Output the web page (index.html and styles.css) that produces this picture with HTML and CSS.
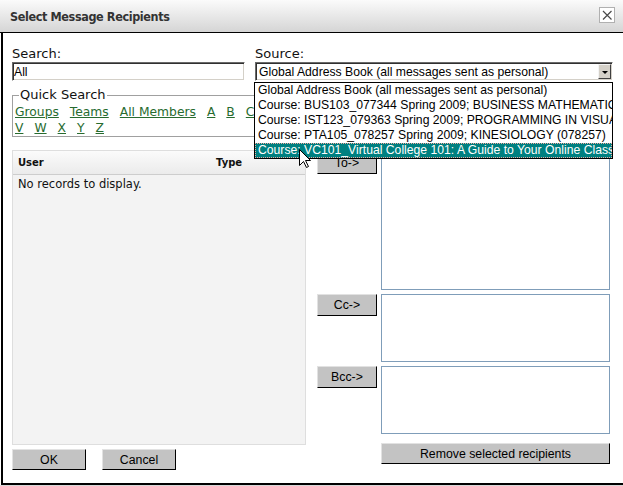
FILE: index.html
```html
<!DOCTYPE html>
<html lang="en">
<head>
<meta charset="utf-8">
<title>Select Message Recipients</title>
<link rel="stylesheet" href="styles.css">
</head>
<body>
<div class="dialog">
  <div class="titlebar">
    <span class="title">Select Message Recipients</span>
    <button class="close" type="button" aria-label="Close">
      <svg width="14" height="14" viewBox="0 0 14 14"><path d="M3 3 L11.5 11.5 M11.5 3 L3 11.5" stroke="#4a4a4a" stroke-width="1.2" fill="none"/></svg>
    </button>
  </div>
  <div class="body">
    <div class="top-row">
      <div class="field search-field">
        <label class="label">Search:</label>
        <input class="text-input" type="text" value="All">
      </div>
      <div class="field source-field">
        <label class="label">Source:</label>
        <div class="select">
          <span class="select-value">Global Address Book (all messages sent as personal)</span>
          <span class="select-arrow"><span class="tri"></span></span>
        </div>
      </div>
    </div>
    <fieldset class="quick">
      <legend class="quick-legend">Quick Search</legend>
      <div class="links">
        <a href="#">Groups</a><a href="#">Teams</a><a href="#">All Members</a><a href="#">A</a><a href="#">B</a><a href="#">C</a><a href="#">D</a><a href="#">E</a><a href="#">F</a><a href="#">G</a><a href="#">H</a><a href="#">I</a><a href="#">J</a><a href="#">K</a><a href="#">L</a><a href="#">M</a><a href="#">N</a><a href="#">O</a><a href="#">P</a><a href="#">Q</a><a href="#">R</a><a href="#">S</a><a href="#">T</a><a href="#">U</a><a href="#">V</a><a href="#">W</a><a href="#">X</a><a href="#">Y</a><a href="#">Z</a>
      </div>
    </fieldset>
    <div class="main">
      <div class="left-col">
        <div class="grid-panel">
          <div class="grid-head">
            <span class="col-user">User</span>
            <span class="col-type">Type</span>
          </div>
          <div class="grid-empty">No records to display.</div>
        </div>
        <div class="actions">
          <button class="btn btn-action" type="button">OK</button>
          <button class="btn btn-action" type="button">Cancel</button>
        </div>
      </div>
      <div class="recipients">
        <button class="btn btn-add" type="button">To-&gt;</button>
        <div class="rbox rbox-to"></div>
        <button class="btn btn-add" type="button">Cc-&gt;</button>
        <div class="rbox"></div>
        <button class="btn btn-add" type="button">Bcc-&gt;</button>
        <div class="rbox"></div>
        <button class="btn btn-remove" type="button">Remove selected recipients</button>
      </div>
    </div>
  </div>
  <ul class="dropdown">
    <li>Global Address Book (all messages sent as personal)</li>
    <li>Course: BUS103_077344 Spring 2009; BUSINESS MATHEMATICS (077344)</li>
    <li>Course: IST123_079363 Spring 2009; PROGRAMMING IN VISUAL BASIC (079363)</li>
    <li>Course: PTA105_078257 Spring 2009; KINESIOLOGY (078257)</li>
    <li class="selected">Course: VC101_Virtual College 101: A Guide to Your Online Classroom</li>
  </ul>
  <svg class="cursor" width="13" height="20" viewBox="0 0 13 20"><path d="M0.5 0.5 L0.5 16.5 L4.5 12.5 L7.5 18.5 L9.5 17.5 L6.5 11.5 L11.5 11.5 Z" fill="#fff" stroke="#000" stroke-width="1"/></svg>
</div>
<div class="page-edge"></div>
</body>
</html>
```
FILE: styles.css
```css
* { box-sizing: border-box; }
html, body { margin: 0; padding: 0; background: #fff; }
body {
  width: 623px;
  height: 486px;
  overflow: hidden;
  font-family: "DejaVu Sans", Verdana, sans-serif;
  color: #000;
}
.dialog {
  position: relative;
  width: 623px;
  height: 485px;
}
.titlebar {
  height: 33px;
  display: flex;
  justify-content: space-between;
  align-items: center;
  padding: 0 8px 0 10px;
  background: linear-gradient(#fbfbfb, #d5d5d5);
  border-bottom: 1px solid #000;
}
.title {
  font-family: "DejaVu Sans Condensed", "Liberation Sans", sans-serif;
  font-weight: bold;
  font-size: 12.5px;
  letter-spacing: -0.38px;
  color: #333;
}
.close {
  align-self: flex-start;
  margin-top: 7px;
  width: 16px;
  height: 16px;
  padding: 0;
  border: 1px solid #b0b0b0;
  background: #fff;
  display: flex;
  align-items: center;
  justify-content: center;
}
.close svg { display: block; }
.body {
  height: 452px;
  margin-left: 1px;
  border-left: 2px solid #000;
  border-bottom: 2px solid #000;
  padding: 12px 0 0 9px;
}
.top-row {
  display: flex;
  gap: 10px;
}
.label {
  display: block;
  font-size: 13px;
  line-height: 17px;
  color: #111;
}
.text-input {
  display: block;
  margin: 0;
  width: 233px;
  height: 19px;
  padding: 0 1px;
  border: 1px solid;
  border-color: #6a6a6a #fff #fff #6a6a6a;
  box-shadow: inset 1px 1px 0 #303030, inset -1px -1px 0 #d4d0c8;
  font-family: "Liberation Sans", Arial, sans-serif;
  font-size: 12.2px;
  color: #000;
  outline: none;
}
.select {
  width: 358px;
  height: 19px;
  display: flex;
  align-items: center;
  padding: 0 1px 0 3px;
  border: 1px solid;
  border-color: #6a6a6a #fff #fff #6a6a6a;
  box-shadow: inset 1px 1px 0 #303030, inset -1px -1px 0 #d4d0c8;
  font-family: "Liberation Sans", Arial, sans-serif;
  font-size: 12.2px;
  white-space: nowrap;
}
.select-arrow {
  margin-left: auto;
  width: 13px;
  height: 15px;
  background: #d4d0c8;
  border: 1px solid;
  border-color: #f4f4f4 #404040 #404040 #f4f4f4;
  display: flex;
  align-items: center;
  justify-content: center;
}
.tri {
  width: 0;
  height: 0;
  border-left: 3px solid transparent;
  border-right: 3px solid transparent;
  border-top: 3px solid #000;
  margin-top: 1px;
}
.quick {
  margin: 6px 0 0 0;
  width: 600px;
  min-width: 0;
  padding: 0 2px 0 2px;
  border: 1px solid #a0a0a0;
}
.quick-legend {
  margin-left: 4px;
  padding: 0 1px;
  font-size: 13px;
  line-height: 16px;
  color: #111;
}
.links {
  display: flex;
  flex-wrap: wrap;
  column-gap: 11px;
  padding-top: 1px;
  font-size: 12.3px;
  line-height: 16px;
}
.links a {
  color: #276b2f;
  text-decoration: underline;
}
.main {
  display: flex;
  align-items: flex-start;
  gap: 11px;
  margin-top: 13px;
}
.left-col {
  width: 294px;
}
.grid-panel {
  height: 295px;
  border: 1px solid #dedede;
  background: #f3f3f3;
}
.grid-head {
  height: 24px;
  display: flex;
  align-items: center;
  padding-left: 5px;
  background: linear-gradient(#fbfbfb, #ebebeb);
  border-bottom: 1px solid #cdcdcd;
  font-size: 10px;
  font-weight: bold;
  color: #111;
}
.col-user { width: 198px; }
.grid-empty {
  padding: 1px 5px 0;
  font-size: 11.5px;
  line-height: 16px;
  color: #111;
}
.actions {
  display: flex;
  gap: 16px;
  margin-top: 4px;
}
.btn {
  margin: 0;
  padding: 0;
  background: #c3c3c3;
  border: 1px solid;
  border-color: #e2e2e2 #000 #000 #e2e2e2;
  font-family: "Liberation Sans", Arial, sans-serif;
  font-size: 12.3px;
  color: #000;
}
.btn-action {
  width: 74px;
  height: 21px;
}
.recipients {
  display: grid;
  grid-template-columns: 60px 229px;
  column-gap: 4px;
  row-gap: 4px;
  padding-top: 2px;
  align-items: start;
  align-content: start;
}
.btn-add {
  height: 22px;
}
.rbox {
  height: 68px;
  border: 1px solid #7f9db9;
  background: #fff;
}
.rbox-to { height: 138px; }
.btn-remove {
  grid-column: 2;
  height: 21px;
  margin-top: 5px;
}
.dropdown {
  position: absolute;
  left: 254px;
  top: 82px;
  width: 359px;
  margin: 0;
  padding: 0;
  list-style: none;
  border: 1px solid #000;
  background: #fff;
  font-family: "Liberation Sans", Arial, sans-serif;
  font-size: 12.2px;
}
.dropdown li {
  height: 15px;
  line-height: 15px;
  padding-left: 3px;
  white-space: nowrap;
  overflow: hidden;
}
.dropdown li.selected {
  background: #008080;
  color: #fff;
  outline: 1px dotted #f0a8a0;
  outline-offset: -1px;
}
.cursor {
  position: absolute;
  left: 299px;
  top: 149px;
}
.page-edge {
  height: 1px;
  background: #d8d8d8;
}
```
